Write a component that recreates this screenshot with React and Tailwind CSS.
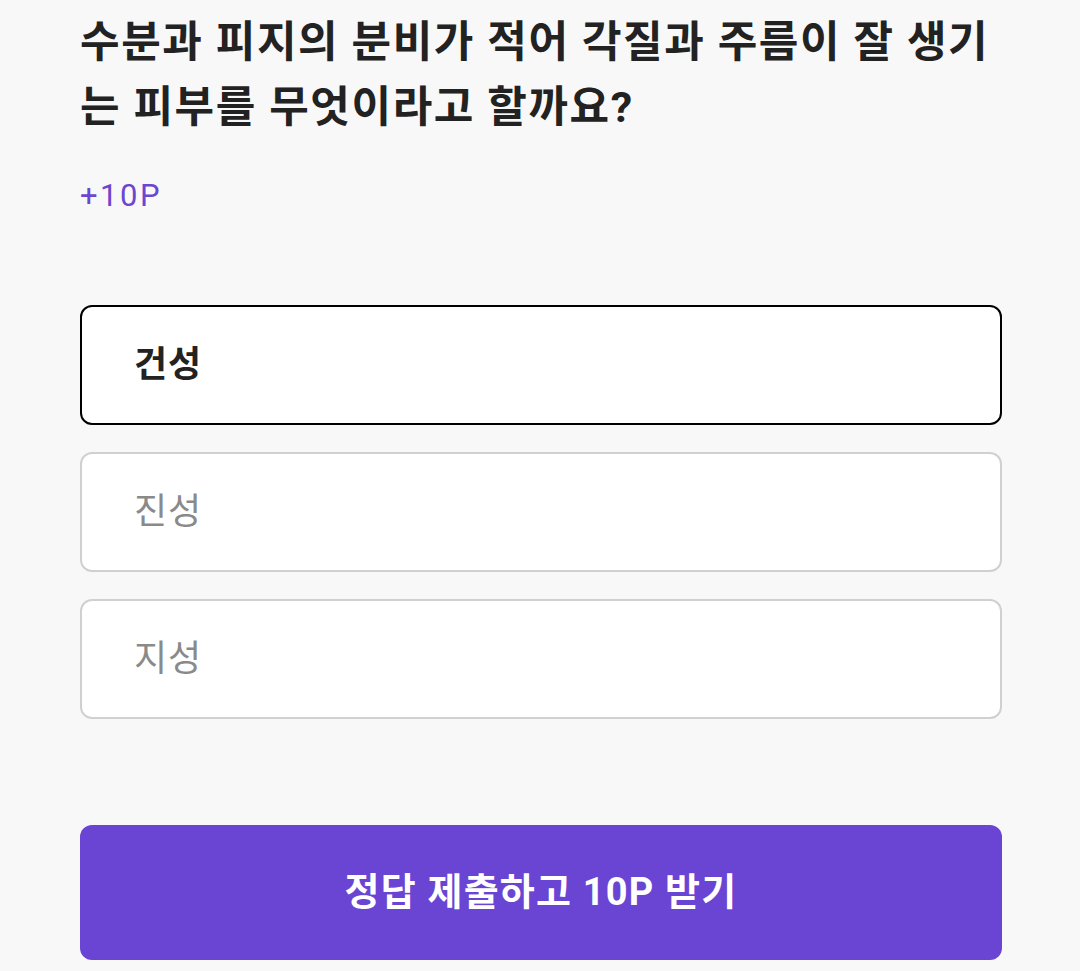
import React, { useState } from "react";

const options = ["건성", "진성", "지성"];

export default function App() {
  const [selected, setSelected] = useState(0);

  return (
    <div className="min-h-[971px] w-full bg-[#f8f8f8] font-['Roboto','Noto_Sans_CJK_KR',sans-serif]">
      <div className="ml-[80px] w-[922px] pt-[10px]">
        {/* Question */}
        <h1 className="text-[43px] leading-[65px] font-bold tracking-[1.6px] text-[#222222] break-all">
          수분과 피지의 분비가 적어 각질과 주름이 잘 생기는 피부를 무엇이라고 할까요?
        </h1>
        <p className="mt-[36px] text-[31px] leading-[40px] tracking-[2.5px] text-[#6b46d0]">+10P</p>

        {/* Answers */}
        <div className="mt-[89px] flex flex-col gap-[27px]">
          {options.map((opt, i) => (
            <button
              key={opt}
              onClick={() => setSelected(i)}
              className={`flex h-[120px] w-full items-center rounded-[12px] border-2 bg-white pl-[52px] text-left text-[36px] tracking-[1px] ${
                selected === i
                  ? "border-black font-bold text-[#222222]"
                  : "border-[#d0d0d0] text-[#8a8a8a]"
              }`}
            >
              {opt}
            </button>
          ))}
        </div>

        {/* Submit */}
        <button className="mt-[106px] flex h-[135px] w-full items-center justify-center rounded-[12px] bg-[#6a44d3] text-[38px] font-bold tracking-[1.2px] text-white">
          정답 제출하고 10P 받기
        </button>
      </div>
    </div>
  );
}
